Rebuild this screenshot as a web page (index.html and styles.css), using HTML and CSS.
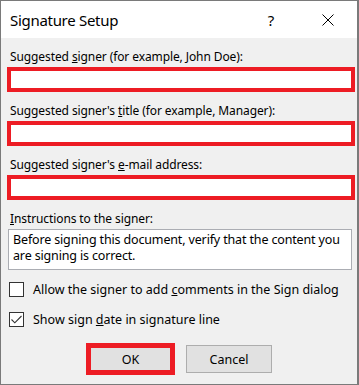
FILE: index.html
```html
<!DOCTYPE html>
<html lang="en">
<head>
    <meta charset="UTF-8">
    <meta name="viewport" content="width=device-width, initial-scale=1.0">
    <title>Signature Setup</title>
    <link rel="stylesheet" href="styles.css">
</head>
<body>
    <div class="window">
        <div class="titlebar">
            <div class="title">Signature Setup</div>
            <div class="title-buttons">
                <span class="help">?</span>
                <span class="close">
                    <svg width="12" height="12" viewBox="0 0 12 12"><path d="M0.5 0.5 L11.5 11.5 M11.5 0.5 L0.5 11.5" stroke="#000" stroke-width="1" fill="none"/></svg>
                </span>
            </div>
        </div>
        <div class="content">
            <div class="field">
                <label>Suggested <u>s</u>igner (for example, John Doe):</label>
                <input type="text" class="highlight-input">
            </div>
            <div class="field">
                <label>Suggested signer's <u>t</u>itle (for example, Manager):</label>
                <input type="text" class="highlight-input">
            </div>
            <div class="field">
                <label>Suggested signer's <u>e</u>-mail address:</label>
                <input type="text" class="highlight-input">
            </div>
            <div class="field">
                <label><u>I</u>nstructions to the signer:</label>
                <div class="instructions">Before signing this document, verify that the content you are signing is correct.</div>
            </div>
            <div class="check-row">
                <span class="checkbox"></span>
                <span>Allow the signer to add <u>c</u>omments in the Sign dialog</span>
            </div>
            <div class="check-row">
                <span class="checkbox">
                    <svg width="11" height="9" viewBox="0 0 11 9"><path d="M0.5 4.5 L3.8 7.8 L10.5 1" stroke="#333" stroke-width="1.1" fill="none"/></svg>
                </span>
                <span>Show sign <u>d</u>ate in signature line</span>
            </div>
            <div class="buttons">
                <button class="btn btn-ok">OK</button>
                <button class="btn">Cancel</button>
            </div>
        </div>
    </div>
</body>
</html>
```

FILE: styles.css
```css
body {
    margin: 0;
    padding: 0;
    font-family: "Noto Sans", "Open Sans", sans-serif;
    font-size: 12px;
    color: #000;
    background-color: #f0f0f0;
}
.window {
    width: 359px;
    height: 385px;
    box-sizing: border-box;
    border: 1px solid #7a7a7a;
    border-right-width: 2px;
    background-color: #f0f0f0;
    display: flex;
    flex-direction: column;
}
.titlebar {
    height: 37px;
    background-color: #fff;
    display: flex;
    justify-content: space-between;
    align-items: center;
    padding-left: 9px;
}
.title {
    font-size: 15px;
    letter-spacing: -0.3px;
}
.title-buttons {
    display: flex;
    align-items: center;
}
.help {
    font-size: 15px;
    width: 46px;
    text-align: center;
    margin-right: 11px;
}
.close {
    width: 46px;
    display: flex;
    justify-content: center;
    margin-right: 6px;
}
.content {
    flex: 1;
    padding: 11px 4px 0 4px;
}
.field {
    margin-bottom: 11px;
}
.field label {
    display: block;
    line-height: 16px;
    padding-left: 5px;
    margin-bottom: 2px;
    letter-spacing: -0.1px;
}
.highlight-input {
    display: block;
    box-sizing: border-box;
    width: 348px;
    height: 25px;
    margin: 0 0 0 2px;
    border: 4px solid #ed1c24;
    background-color: #fff;
    padding: 0;
    outline: none;
}
.instructions {
    margin-left: 3px;
    width: 344px;
    height: 41px;
    box-sizing: border-box;
    border: 1px solid #abadb3;
    background-color: #fff;
    padding: 2px 4px;
    font-size: 12.5px;
    line-height: 16px;
    letter-spacing: -0.15px;
}
.check-row {
    display: flex;
    align-items: center;
    padding-left: 4px;
    height: 16px;
    margin-top: 1px;
    font-size: 12.5px;
}
.check-row + .check-row {
    margin-top: 14px;
}
.checkbox {
    width: 13px;
    height: 13px;
    border: 1px solid #333;
    background-color: #fff;
    margin-right: 9px;
    display: flex;
    align-items: center;
    justify-content: center;
}
.buttons {
    display: flex;
    justify-content: center;
    align-items: center;
    gap: 11px;
    margin-top: 16px;
}
.btn {
    font-family: inherit;
    font-size: 12.5px;
    width: 86px;
    height: 28px;
    background-color: #e1e1e1;
    border: 1px solid #adadad;
    padding: 0;
}
.btn-ok {
    width: 89px;
    height: 32px;
    border: 5px solid #ed1c24;
}
```
